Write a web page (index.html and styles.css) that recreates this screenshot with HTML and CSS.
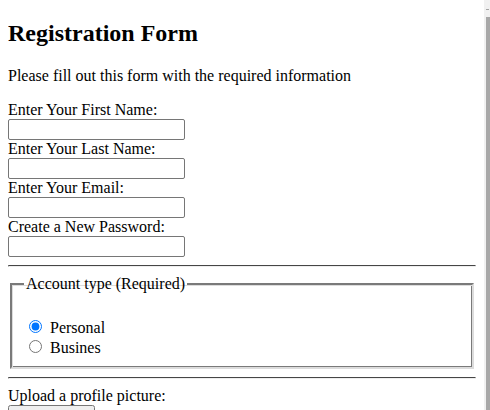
FILE: index.html
```html
<!DOCTYPE html>
<html>
<head>
<meta charset="utf-8">
<title>Registration Form</title>
<link rel="stylesheet" href="styles.css">
</head>
<body>
<h2 class="title">Registration Form</h2>
<p class="intro">Please fill out this form with the required information</p>
<form class="form">
<label for="fname">Enter Your First Name:</label><br>
<input class="field" type="text" id="fname"><br>
<label for="lname">Enter Your Last Name:</label><br>
<input class="field" type="text" id="lname"><br>
<label for="email">Enter Your Email:</label><br>
<input class="field" type="email" id="email"><br>
<label for="pass">Create a New Password:</label><br>
<input class="field" type="password" id="pass"><br>
<hr class="rule">
<fieldset class="group">
<legend class="legend">Account type (Required)</legend>
<br>
<input class="radio" type="radio" id="personal" name="acct" checked> <label for="personal">Personal</label><br>
<input class="radio" type="radio" id="business" name="acct"> <label for="business">Busines</label>
</fieldset>
<hr class="rule">
<label for="pic">Upload a profile picture:</label><br>
<input type="file" id="pic"><br>
<br>
<br>
</form>
<div class="scrollbar" aria-hidden="true"><div class="scroll-arrow"></div><div class="scroll-thumb"></div></div>
</body>
</html>
```
FILE: styles.css
```css
body {
  font-family: "Liberation Serif", "Times New Roman", serif;
  font-size: 16px;
  color: #000;
  background: #fff;
  margin: 8px 14px 8px 8px;
}
.title {
  margin-top: 12px;
}
.field {
  width: 177px;
  height: 21px;
  box-sizing: border-box;
  border: 1px solid #767676;
  border-radius: 2px;
}
.radio {
  width: 13px;
  height: 13px;
  margin: 3px 4px 0 5px;
}
.rule {
  border: 1px inset #eee;
  border-top-color: #9a9a9a;
}
.group {
  border-style: solid;
  border-width: 2px;
  border-color: #7a7a7a #dcdcdc #dcdcdc #7a7a7a;
  box-shadow: inset 1px 1px 0 #dcdcdc, inset -1px -1px 0 #7a7a7a;
}
.scrollbar {
  position: fixed;
  top: 0;
  right: 0;
  bottom: 0;
  width: 6px;
  background: #f1f1f1;
}
.scroll-arrow {
  position: absolute;
  top: 9px;
  right: 1px;
  width: 3px;
  height: 1px;
  background: #a3a3a3;
}
.scroll-thumb {
  position: absolute;
  top: 17px;
  right: 0;
  bottom: 0;
  width: 4px;
  background: #a8a8a8;
}
```
